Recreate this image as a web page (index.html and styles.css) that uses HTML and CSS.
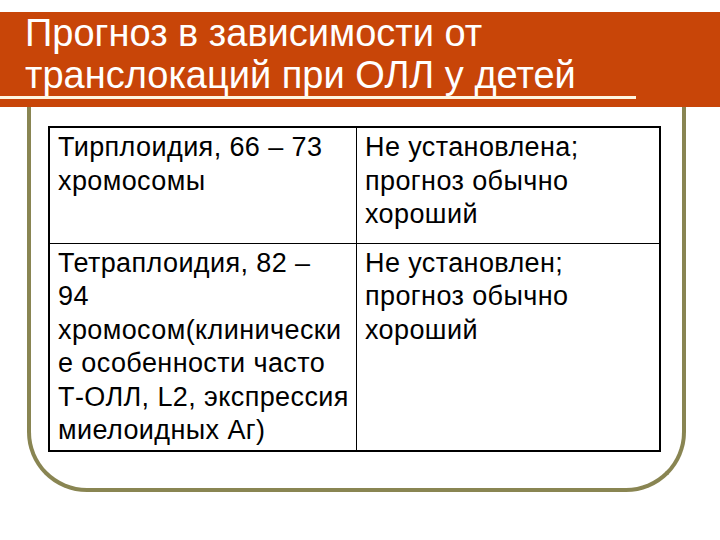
FILE: index.html
```html
<!DOCTYPE html>
<html lang="ru">
<head>
<meta charset="utf-8">
<title>Прогноз</title>
<link rel="stylesheet" href="styles.css">
</head>
<body>
<div class="slide">
  <header class="title-bar">
    <h1 class="title">Прогноз в зависимости от<br>транслокаций при ОЛЛ у детей</h1>
  </header>
  <div class="frame">
    <table class="grid">
      <tr class="row-first">
        <td class="cell cell-left">Тирплоидия, 66 – 73<br>хромосомы</td>
        <td class="cell cell-right">Не установлена;<br>прогноз обычно<br>хороший</td>
      </tr>
      <tr>
        <td class="cell cell-left">Тетраплоидия, 82 –<br>94<br>хромосом(клинически<br>е особенности часто<br>Т-ОЛЛ, L2, экспрессия<br>миелоидных Аг)</td>
        <td class="cell cell-right">Не установлен;<br>прогноз обычно<br>хороший</td>
      </tr>
    </table>
  </div>
</div>
</body>
</html>
```
FILE: styles.css
```css
html, body {
  margin: 0;
  padding: 0;
  background: #ffffff;
}
.slide {
  width: 720px;
  height: 540px;
  padding-top: 12px;
  box-sizing: border-box;
  font-family: "Liberation Sans", Arial, sans-serif;
  overflow: hidden;
}
.title-bar {
  position: relative;
  height: 95px;
  background: #c84508;
  box-sizing: border-box;
  padding: 0 0 0 25px;
}
.title-bar::after {
  content: "";
  position: absolute;
  left: 0;
  top: 84px;
  width: 636px;
  height: 3px;
  background: #fff6e0;
}
.title {
  margin: 0;
  font-weight: normal;
  font-size: 38px;
  line-height: 42px;
  color: #ffffff;
  white-space: nowrap;
  position: relative;
  z-index: 1;
}
.frame {
  margin-left: 27px;
  width: 659px;
  height: 385px;
  box-sizing: border-box;
  border: 4px solid #898552;
  border-top: none;
  border-radius: 0 0 60px 60px;
  padding: 19px 0 0 17px;
}
.grid {
  border-collapse: collapse;
  width: 613px;
  border: 2px solid #000000;
}
.cell {
  border: 1px solid #000000;
  vertical-align: top;
  font-size: 27px;
  letter-spacing: 0.4px;
  line-height: 33.6px;
  color: #000000;
  padding: 3px 6px 2px 8px;
  white-space: nowrap;
}
.cell-left {
  width: 292px;
}
.row-first {
  height: 116px;
}
```
